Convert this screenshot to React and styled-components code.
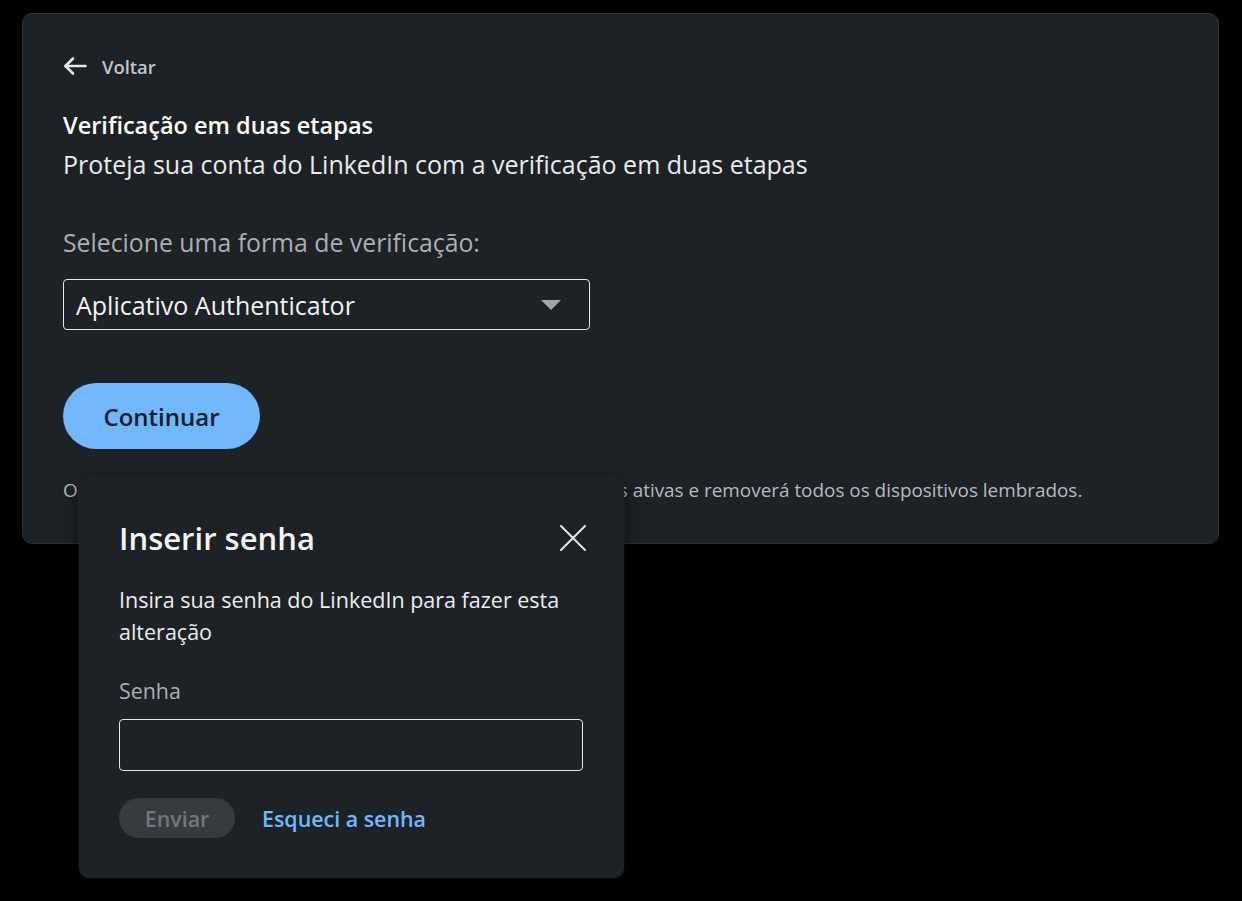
import React from 'react'
import styled, { createGlobalStyle } from 'styled-components'

const GlobalStyle = createGlobalStyle`
  html, body {
    margin: 0;
    background: #000;
    font-family: "Open Sans", "Noto Sans", sans-serif;
  }
`

const Page = styled.div`
  position: relative;
  width: 1242px;
  height: 901px;
  padding: 13px 23px 0 22px;
  box-sizing: border-box;
`

const Card = styled.section`
  background: #1d2226;
  border: 1px solid #2c3136;
  border-radius: 10px;
  height: 531px;
  box-sizing: border-box;
  padding: 38px 40px 0 40px;
  display: flex;
  flex-direction: column;
`

const BackLink = styled.a`
  display: flex;
  align-items: center;
  gap: 15px;
  color: #c0c6cc;
  font-size: 18.4px;
  font-weight: 600;
  height: 28px;
  text-decoration: none;
`

const Title = styled.h2`
  margin: 31px 0 0;
  font-size: 23.5px;
  font-weight: 600;
  color: #fff;
  line-height: 28px;
`

const Subtitle = styled.p`
  margin: 11px 0 0;
  font-size: 25px;
  color: #e9eaeb;
  line-height: 28px;
`

const Label = styled.div`
  margin-top: 50px;
  font-size: 24.8px;
  color: #a9afb5;
  line-height: 28px;
`

const Select = styled.div`
  margin-top: 23px;
  width: 527px;
  height: 51px;
  box-sizing: border-box;
  border: 1.5px solid #e3e5e7;
  border-radius: 4px;
  display: flex;
  align-items: center;
  justify-content: space-between;
  padding: 0 28px 0 12px;
  font-size: 25px;
  color: #f2f2f2;
`

const Caret = styled.span`
  width: 0;
  height: 0;
  border-left: 10px solid transparent;
  border-right: 10px solid transparent;
  border-top: 10px solid #a3a6a9;
`

const PrimaryButton = styled.button`
  margin-top: 53px;
  align-self: flex-start;
  width: 197px;
  height: 66px;
  border: none;
  border-radius: 33px;
  background: #71b7fb;
  color: #15202b;
  font-family: inherit;
  font-size: 24px;
  font-weight: 600;
`

const Note = styled.p`
  margin: 29px 0 0;
  font-size: 18.9px;
  color: #b4bac0;
  line-height: 24px;
  white-space: nowrap;
`

const Modal = styled.div`
  position: absolute;
  left: 79px;
  top: 478px;
  width: 545px;
  height: 400px;
  box-sizing: border-box;
  background: #1d2226;
  border-radius: 10px;
  box-shadow: 0 0 0 1px rgba(255, 255, 255, 0.03), 0 6px 18px rgba(0, 0, 0, 0.6);
  padding: 40px 40px 0 40px;
  display: flex;
  flex-direction: column;
`

const ModalHeader = styled.div`
  display: flex;
  align-items: center;
  justify-content: space-between;
  height: 40px;
`

const ModalTitle = styled.h3`
  margin: 0;
  font-size: 31px;
  font-weight: 600;
  color: #f4f4f4;
`

const CloseButton = styled.button`
  background: none;
  border: none;
  padding: 0;
  margin-right: -4px;
  display: flex;
  color: #e6e7e8;
`

const ModalText = styled.p`
  margin: 26px 0 0;
  font-size: 21.5px;
  line-height: 32px;
  color: #eceded;
`

const FieldLabel = styled.label`
  margin-top: 29px;
  font-size: 21.4px;
  color: #a9afb5;
  line-height: 28px;
`

const Input = styled.input`
  margin-top: 14px;
  width: 464px;
  height: 52px;
  box-sizing: border-box;
  background: transparent;
  border: 1.5px solid #e3e5e7;
  border-radius: 4px;
  outline: none;
`

const Actions = styled.div`
  margin-top: 27px;
  display: flex;
  align-items: center;
  gap: 27px;
`

const GhostButton = styled.button`
  width: 116px;
  height: 40px;
  border: none;
  border-radius: 20px;
  background: #373b40;
  color: #71767b;
  font-family: inherit;
  font-size: 21.4px;
  font-weight: 600;
`

const TextLink = styled.a`
  color: #71b7fb;
  font-size: 21.4px;
  font-weight: 600;
  text-decoration: none;
`

function ArrowLeft() {
  return (
    <svg width="24" height="24" viewBox="0 0 24 24" fill="none" stroke="#e6e8ea" strokeWidth="2.6" strokeLinecap="round" strokeLinejoin="round">
      <path d="M22.5 12H2.5" />
      <path d="M10 4.5L2.5 12l7.5 7.5" />
    </svg>
  )
}

function CloseIcon() {
  return (
    <svg width="30" height="30" viewBox="0 0 30 30" fill="none" stroke="currentColor" strokeWidth="2" strokeLinecap="round">
      <path d="M3 3l24 24M27 3L3 27" />
    </svg>
  )
}

export default function App() {
  return (
    <Page>
      <GlobalStyle />
      <Card>
        <BackLink href="#">
          <ArrowLeft />
          Voltar
        </BackLink>
        <Title>Verificação em duas etapas</Title>
        <Subtitle>Proteja sua conta do LinkedIn com a verificação em duas etapas</Subtitle>
        <Label>Selecione uma forma de verificação:</Label>
        <Select>
          Aplicativo Authenticator
          <Caret />
        </Select>
        <PrimaryButton>Continuar</PrimaryButton>
        <Note>
          O uso da verificação em duas etapas encerrará todas as sessões ativas e removerá todos os dispositivos lembrados.
        </Note>
      </Card>

      <Modal>
        <ModalHeader>
          <ModalTitle>Inserir senha</ModalTitle>
          <CloseButton aria-label="Fechar">
            <CloseIcon />
          </CloseButton>
        </ModalHeader>
        <ModalText>Insira sua senha do LinkedIn para fazer esta alteração</ModalText>
        <FieldLabel>Senha</FieldLabel>
        <Input type="password" />
        <Actions>
          <GhostButton disabled>Enviar</GhostButton>
          <TextLink href="#">Esqueci a senha</TextLink>
        </Actions>
      </Modal>
    </Page>
  )
}
